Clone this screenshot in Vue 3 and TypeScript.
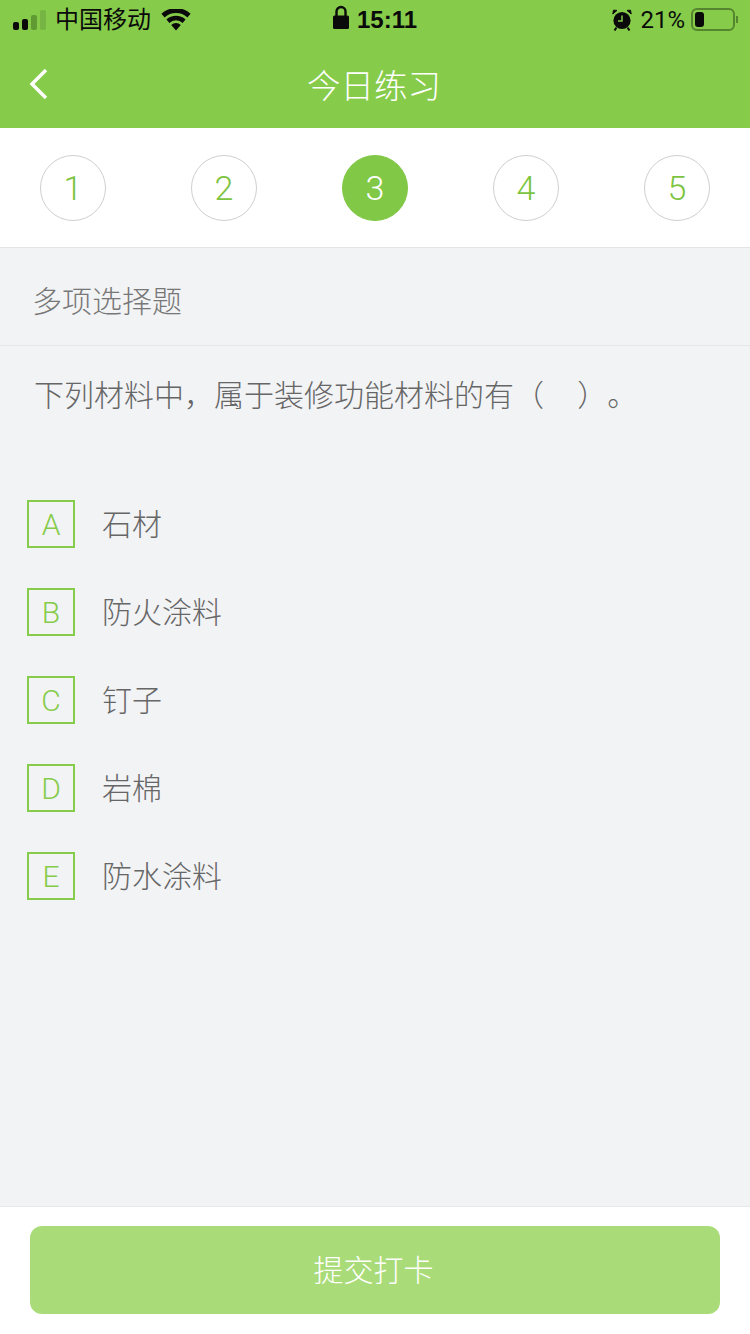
<script setup lang="ts">
const steps = [1, 2, 3, 4, 5];
const current = 3;

const options = [
  { key: "A", label: "石材" },
  { key: "B", label: "防火涂料" },
  { key: "C", label: "钉子" },
  { key: "D", label: "岩棉" },
  { key: "E", label: "防水涂料" },
];
</script>

<template>
  <div class="page">
    <header class="top">
      <div class="status">
        <div class="status-left">
          <div class="signal">
            <i class="on" style="height: 8px"></i>
            <i class="on" style="height: 11px"></i>
            <i class="mid" style="height: 15px"></i>
            <i style="height: 20px"></i>
          </div>
          <span class="carrier">中国移动</span>
          <svg class="wifi" width="30" height="22" viewBox="0 0 30 22">
            <path d="M15 21.5 10.2 16a7 7 0 0 1 9.6 0z" fill="#0a0a0a" />
            <path d="M8.4 13.9 5.4 10.5a14.2 14.2 0 0 1 19.2 0l-3 3.4a9.8 9.8 0 0 0-13.2 0z" fill="#0a0a0a" />
            <path d="M3.6 8.4.4 4.8a21.6 21.6 0 0 1 29.2 0l-3.2 3.6a17 17 0 0 0-22.8 0z" fill="#0a0a0a" />
          </svg>
        </div>
        <div class="status-mid">
          <svg class="lock" width="18" height="25" viewBox="0 0 18 25">
            <path d="M4.5 11V6.5a4.5 4.5 0 0 1 9 0V11" fill="none" stroke="#0a0a0a" stroke-width="2.4" />
            <rect x="1" y="10.5" width="16" height="13.5" rx="1.5" fill="#0a0a0a" />
          </svg>
          <span class="time">15:11</span>
        </div>
        <div class="status-right">
          <svg class="alarm" width="20" height="22" viewBox="0 0 20 22">
            <circle cx="10" cy="11.5" r="8.6" fill="#0a0a0a" />
            <path d="M10 6.5v5.5H6" fill="none" stroke="#86cc4a" stroke-width="1.5" />
            <path d="M.8 5 5 1.4 1.5 1.2zM19.2 5 15 1.4l3.5-.2z" fill="#0a0a0a" stroke="#0a0a0a" stroke-width="1" />
            <path d="M4.5 18.5l-2 3M15.5 18.5l2 3" stroke="#0a0a0a" stroke-width="2" />
          </svg>
          <span class="percent">21%</span>
          <div class="battery">
            <div class="battery-body"><div class="battery-level"></div></div>
            <div class="battery-cap"></div>
          </div>
        </div>
      </div>
      <div class="nav">
        <svg class="back" width="20" height="32" viewBox="0 0 20 32">
          <path d="M17 2 3 16l14 14" fill="none" stroke="#fff" stroke-width="3.4" />
        </svg>
        <h1 class="title">今日练习</h1>
      </div>
    </header>

    <div class="steps">
      <div
        v-for="step in steps"
        :key="step"
        class="step"
        :class="{ active: step === current }"
      >
        {{ step }}
      </div>
    </div>

    <div class="type">多项选择题</div>

    <main class="body">
      <p class="question">下列材料中，属于装修功能材料的有（&nbsp;&nbsp;&nbsp;&nbsp;）。</p>
      <ul class="options">
        <li v-for="opt in options" :key="opt.key" class="option">
          <span class="option-key">{{ opt.key }}</span>
          <span class="option-label">{{ opt.label }}</span>
        </li>
      </ul>
    </main>

    <footer class="bottom">
      <button class="submit" type="button">提交打卡</button>
    </footer>
  </div>
</template>

<style scoped>
.page {
  width: 750px;
  height: 1334px;
  display: flex;
  flex-direction: column;
  background: #f2f3f5;
  font-family: "Liberation Sans", "Noto Sans CJK SC", sans-serif;
  font-weight: 300;
  text-spacing-trim: space-all;
  overflow: hidden;
}

.top {
  height: 128px;
  background: #86cc4a;
  flex-shrink: 0;
}

.status {
  height: 40px;
  display: grid;
  grid-template-columns: 1fr auto 1fr;
  align-items: center;
  color: #0a0a0a;
}

.status-left {
  display: flex;
  align-items: center;
  padding-left: 13px;
}

.signal {
  display: flex;
  align-items: flex-end;
  gap: 3px;
  height: 21px;
  margin-bottom: 2px;
}

.signal i {
  display: block;
  width: 6px;
  border-radius: 2px;
  background: #76b543;
}

.signal i.mid {
  background: #5f9a33;
}

.signal i.on {
  background: #0a0a0a;
}

.carrier {
  margin-left: 9px;
  font-size: 24px;
  font-weight: 400;
  line-height: 40px;
}

.wifi {
  margin-left: 10px;
}

.status-mid {
  display: flex;
  align-items: center;
  gap: 7px;
  margin-top: -3px;
  margin-left: -1px;
}

.lock {
  margin-bottom: 2px;
}

.time {
  margin-top: 3px;
  font-size: 24px;
  font-weight: 700;
  line-height: 40px;
}

.status-right {
  display: flex;
  align-items: center;
  justify-content: flex-end;
  padding-right: 12px;
}

.alarm {
  margin-right: -4px;
}

.percent {
  margin-left: 12px;
  font-family: Roboto, sans-serif;
  font-size: 24px;
  font-weight: 400;
  line-height: 40px;
}

.battery {
  display: flex;
  align-items: center;
  margin-left: 6px;
  margin-bottom: 1px;
}

.battery-body {
  width: 44px;
  height: 23px;
  box-sizing: border-box;
  padding: 2px;
  border: 2px solid #55852f;
  border-radius: 6px;
}

.battery-level {
  width: 9px;
  height: 100%;
  border-radius: 3px;
  background: #0a0a0a;
}

.battery-cap {
  width: 2px;
  height: 7px;
  margin-left: 1px;
  background: #55852f;
}

.nav {
  position: relative;
  height: 88px;
  display: flex;
  align-items: center;
  justify-content: center;
}

.back {
  position: absolute;
  left: 29px;
  top: 28px;
}

.title {
  margin: 0 2px 2px 0;
  color: #fff;
  font-size: 33.5px;
  font-weight: 300;
}

.steps {
  height: 119px;
  flex-shrink: 0;
  box-sizing: content-box;
  display: flex;
  align-items: center;
  justify-content: space-between;
  padding: 0 40px;
  background: #fff;
  border-bottom: 1px solid #e4e4e4;
}

.step {
  width: 66px;
  height: 66px;
  box-sizing: border-box;
  display: flex;
  align-items: center;
  justify-content: center;
  border: 1px solid #cfcfcf;
  border-radius: 50%;
  color: #7cc440;
  font-family: Roboto, sans-serif;
  font-size: 34px;
  font-weight: 300;
}

.step.active {
  border-color: #80c846;
  background: #80c846;
  color: #fff;
}

.type {
  height: 98px;
  flex-shrink: 0;
  box-sizing: border-box;
  padding: 4px 32px 0;
  display: flex;
  align-items: center;
  border-bottom: 1px solid #e6e7e9;
  color: #777;
  font-size: 30px;
}

.body {
  flex: 1;
  min-height: 0;
}

.question {
  margin: 0;
  padding: 28px 34px 0;
  color: #666;
  font-size: 30px;
  line-height: 44px;
  white-space: nowrap;
}

.options {
  list-style: none;
  margin: 0;
  padding: 82px 0 0 27px;
  display: flex;
  flex-direction: column;
  gap: 40px;
}

.option {
  display: flex;
  align-items: center;
  height: 48px;
}

.option-key {
  width: 48px;
  height: 48px;
  box-sizing: border-box;
  display: flex;
  align-items: center;
  justify-content: center;
  border: 2px solid #86cc4a;
  color: #86cc4a;
  font-family: Roboto, sans-serif;
  font-size: 30px;
  font-weight: 300;
}

.option-label {
  margin-left: 27px;
  margin-bottom: 4px;
  color: #666;
  font-size: 30px;
}

.bottom {
  height: 128px;
  flex-shrink: 0;
  box-sizing: border-box;
  padding: 19px 30px 0;
  background: #fff;
  border-top: 1px solid #e6e7e9;
}

.submit {
  display: block;
  width: 100%;
  height: 88px;
  padding: 0 3px 4px 0;
  border: 0;
  border-radius: 12px;
  background: #a9dc79;
  color: #fff;
  font-family: inherit;
  font-size: 30px;
  font-weight: 300;
}
</style>
